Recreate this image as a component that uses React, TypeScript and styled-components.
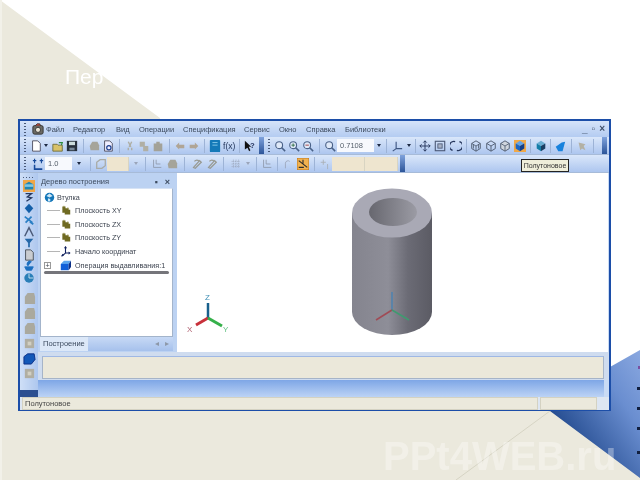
import styled, { createGlobalStyle } from "styled-components";

const GlobalStyle = createGlobalStyle`
  html, body {
    margin: 0;
    padding: 0;
    background: #fff;
  }
  * {
    box-sizing: border-box;
  }
`;

type Item = { k: string; w: number };

const MENU = [
  { t: "Файл", w: 27 },
  { t: "Редактор", w: 43 },
  { t: "Вид", w: 23 },
  { t: "Операции", w: 44 },
  { t: "Спецификация", w: 61 },
  { t: "Сервис", w: 35 },
  { t: "Окно", w: 27 },
  { t: "Справка", w: 39 },
  { t: "Библиотеки", w: 60 },
];

const ROW_ONE: Item[] = [
  { k: "grip", w: 10 }, { k: "new", w: 12 }, { k: "drop", w: 8 }, { k: "open", w: 15 }, { k: "save", w: 14 },
  { k: "sep", w: 8 }, { k: "blob", w: 14 }, { k: "preview", w: 14 }, { k: "sep", w: 8 }, { k: "cut", w: 14 },
  { k: "copy", w: 14 }, { k: "paste", w: 14 }, { k: "sep", w: 8 }, { k: "undo", w: 14 }, { k: "redo", w: 14 },
  { k: "sep", w: 7 }, { k: "book", w: 14 }, { k: "fx", w: 14 }, { k: "sep", w: 7 }, { k: "help", w: 14 },
  { k: "strip", w: 8 }, { k: "grip", w: 8 }, { k: "zoom", w: 14 }, { k: "zoomIn", w: 14 }, { k: "zoomOut", w: 14 },
  { k: "sep", w: 8 }, { k: "zoom", w: 14 }, { k: "scale", w: 37 }, { k: "drop", w: 9 }, { k: "sep", w: 6 },
  { k: "axes", w: 16 }, { k: "drop", w: 7 }, { k: "sep", w: 6 }, { k: "move", w: 14 }, { k: "frame", w: 16 },
  { k: "rotate", w: 15 }, { k: "sep", w: 6 }, { k: "wireA", w: 14 }, { k: "wireB", w: 15 }, { k: "wireC", w: 14 },
  { k: "shaded", w: 15 }, { k: "sep", w: 7 }, { k: "cubeDark", w: 14 }, { k: "sep", w: 5 }, { k: "cubeBlue", w: 14 },
  { k: "sep", w: 8 }, { k: "fadedStar", w: 14 }, { k: "sep", w: 8 }, { k: "strip", w: 14 },
];

const ROW_TWO: Item[] = [
  { k: "grip", w: 10 }, { k: "snap", w: 15 }, { k: "step", w: 27 }, { k: "drop", w: 14 }, { k: "sep", w: 8 },
  { k: "fadedBox", w: 13 }, { k: "field", w: 22 }, { k: "fadedDrop", w: 13 }, { k: "sep", w: 7 },
  { k: "fadedAxis", w: 15 }, { k: "blob", w: 15 }, { k: "sep", w: 10 }, { k: "fadedArc", w: 15 }, { k: "fadedArc", w: 15 },
  { k: "sep", w: 9 }, { k: "fadedGrid", w: 15 }, { k: "fadedDrop", w: 10 }, { k: "sep", w: 6 }, { k: "fadedAxis", w: 15 },
  { k: "sep", w: 7 }, { k: "fadedHook", w: 14 }, { k: "ortho", w: 16 }, { k: "sep", w: 6 }, { k: "fadedPlus", w: 15 },
  { k: "wide", w: 33 }, { k: "wide", w: 33 }, { k: "strip", w: 8 },
];

const SIDE_TOP = ["sideActive", "sideCurve", "sideDiamond", "sideTools", "sideAngle", "sideFunnel", "sideDoc", "sideBowl", "sideGlobe"];
const SIDE_LOW = ["sideGrey", "sideGrey", "sideGrey", "sideGreySquare", "sideBlue", "sideGreySquare"];

const TREE = [
  { t: "Плоскость XY", k: "plane" },
  { t: "Плоскость ZX", k: "plane" },
  { t: "Плоскость ZY", k: "plane" },
  { t: "Начало координат", k: "origin" },
];

const Glyph = ({ k }: { k: string }) => {
  const shapes: Record<string, React.ReactNode> = {
    new: <path d="M3 1h6l3 3v9H3z" fill="#fff" stroke="#445" />,
    open: (
      <>
        <path d="M1 5h5l1 1h5v7H1z" fill="#d8c26a" stroke="#6b6a3a" />
        <path d="M8 3l4 0-1 3" fill="none" stroke="#2e8a3c" strokeWidth="1.4" />
      </>
    ),
    save: (
      <>
        <rect x="1" y="1" width="12" height="12" fill="#27303c" />
        <rect x="3.5" y="2" width="7" height="4" fill="#cdd" />
        <rect x="4" y="9" width="6" height="3" fill="#789" />
      </>
    ),
    blob: <path d="M2 7l3-5h6l2 4v6H3z" fill="#a5a49a" />,
    preview: (
      <>
        <path d="M3 1h6l3 3v9H3z" fill="#eef" stroke="#445" />
        <circle cx="8" cy="9" r="2.5" fill="none" stroke="#1d3f8f" strokeWidth="1.4" />
      </>
    ),
    cut: <path d="M5 2l3 6M9 2L6 8M5 9v3M9 9v3" stroke="#aeaea4" strokeWidth="1.6" fill="none" />,
    copy: <path d="M2 2h6v5h4v6H6V8H2z" fill="#b0afa5" />,
    paste: <path d="M2 4h3V2h4v2h3v9H2z" fill="#a3a298" />,
    undo: <path d="M2 7l4-4v2.500h6v4H6V11z" fill="#b0a595" />,
    redo: <path d="M12 7L8 3v2.500H2v4h6V11z" fill="#b0a595" />,
    book: (
      <>
        <rect x="1" y="0" width="12" height="14" rx="1" fill="#1479b8" />
        <path d="M4 3h6M4 6h6" stroke="#8fd0ee" />
      </>
    ),
    fx: <text x="0" y="11" fontSize="10" fontFamily="Liberation Sans" fill="#25385c">f(x)</text>,
    help: (
      <>
        <path d="M1 1v10l3-2 2 4 1.500-1-2-4h3z" fill="#111" />
        <text x="7" y="9" fontSize="9" fontWeight="700" fontFamily="Liberation Sans" fill="#1c2b57">?</text>
      </>
    ),
    zoom: (
      <>
        <circle cx="6" cy="6" r="4" fill="#dfe9f8" stroke="#4a6288" strokeWidth="1.300" />
        <path d="M9 9l4 4" stroke="#4a6288" strokeWidth="1.800" />
      </>
    ),
    zoomIn: (
      <>
        <circle cx="6" cy="6" r="4" fill="#dfe9f8" stroke="#4a6288" strokeWidth="1.300" />
        <path d="M9 9l4 4" stroke="#4a6288" strokeWidth="1.800" />
        <path d="M4 6h4M6 4v4" stroke="#2a6a3a" />
      </>
    ),
    zoomOut: (
      <>
        <circle cx="6" cy="6" r="4" fill="#dfe9f8" stroke="#4a6288" strokeWidth="1.300" />
        <path d="M9 9l4 4" stroke="#4a6288" strokeWidth="1.800" />
        <path d="M4 6h4" stroke="#a03030" />
      </>
    ),
    axes: <path d="M6 2v8M6 10H13M6 10L2 13" stroke="#3d5580" strokeWidth="1.300" fill="none" />,
    move: <path d="M7 1v12M1 7h12M7 1L5 3M7 1l2 2M7 13l-2-2M7 13l2-2M1 7l2-2M1 7l2 2M13 7l-2-2M13 7l-2 2" stroke="#27385e" strokeWidth="1.100" fill="none" />,
    frame: (
      <>
        <rect x="1.500" y="1.500" width="11" height="11" fill="none" stroke="#4d5b78" strokeWidth="1.300" />
        <rect x="4.500" y="4.500" width="5" height="5" fill="#a8b3c6" stroke="#4d5b78" />
      </>
    ),
    rotate: <path d="M6 2A5 5 0 0 0 3 12M8 12A5 5 0 0 0 11 2" stroke="#27385e" strokeWidth="1.600" fill="none" />,
    wireA: (
      <>
        <path d="M2 4l5-3 5 3v6l-5 3-5-3z" fill="none" stroke="#515d72" strokeWidth="1.100" />
        <path d="M2 4l5 3 5-3M7 7v6M4 5v5M10 5v5" stroke="#515d72" fill="none" />
      </>
    ),
    wireB: <path d="M2 4l5-3 5 3v6l-5 3-5-3zM2 4l5 3 5-3M7 7v6" fill="none" stroke="#515d72" strokeWidth="1.100" />,
    wireC: (
      <>
        <path d="M2 4l5-3 5 3v6l-5 3-5-3z" fill="#cfd5dd" stroke="#515d72" strokeWidth="1.100" />
        <path d="M2 4l5 3 5-3M7 7v6" fill="none" stroke="#515d72" />
      </>
    ),
    shaded: (
      <>
        <rect x="-1" y="-1" width="16" height="16" fill="#f0a848" />
        <path d="M2 4l5-3 5 3-5 3z" fill="#63a4e8" />
        <path d="M2 4l5 3v6l-5-3z" fill="#1c66c4" />
        <path d="M12 4L7 7v6l5-3z" fill="#123f8a" />
      </>
    ),
    cubeDark: (
      <>
        <path d="M2 4l5-3 5 3-5 3z" fill="#6aaed2" />
        <path d="M2 4l5 3v6l-5-3z" fill="#147ea8" />
        <path d="M12 4L7 7v6l5-3z" fill="#1a3f63" />
      </>
    ),
    cubeBlue: <path d="M2 8l3 5h5l3-11-4 1z" fill="#1782dd" />,
    fadedStar: <path d="M3 3l8 2-2 2 2 5-4-2-2 2z" fill="#b3b1a4" />,
    snap: (
      <>
        <path d="M3 1v5M1 3h4M11 1v5M9 3h4" stroke="#184a9a" strokeWidth="1.300" />
        <path d="M3 8v5h9" stroke="#184a9a" strokeWidth="1.800" fill="none" />
      </>
    ),
    fadedBox: <path d="M2 5l4-3h6v7l-4 3H2z" fill="none" stroke="#a9aba6" strokeWidth="1.500" />,
    fadedAxis: <path d="M3 2v9h9M6 2v5h5" fill="none" stroke="#8f99ac" />,
    fadedArc: <path d="M3 11l7-8 2 2-7 7zM4 4a4 4 0 0 1 5-1" fill="none" stroke="#989a92" strokeWidth="1.500" />,
    fadedGrid: <path d="M2 4h10M2 7h10M2 10h10M4 2v10M7 2v10M10 2v10" stroke="#98a3b8" strokeDasharray="1 1" />,
    fadedHook: <path d="M4 12V6a3 3 0 0 1 5-2" fill="none" stroke="#9aa5ba" />,
    fadedPlus: <path d="M5 2v6M2 5h6M10 7v6" stroke="#a9b0b5" fill="none" />,
    ortho: (
      <>
        <rect x="0" y="0" width="14" height="14" fill="#f2b24f" stroke="#b66f1a" />
        <path d="M2 3l10 8M7 2v5M2 11h6" stroke="#2c2c2c" strokeWidth="1.300" fill="none" />
      </>
    ),
    plane: (
      <>
        <path d="M3 2h4v2h4v2h2v6H6v-2H3z" fill="#6f6a22" />
        <path d="M5 1v2M10 3v2" stroke="#8f8a3a" />
      </>
    ),
    origin: (
      <>
        <path d="M7 1v8M7 9h6M7 9l-5 4" stroke="#10205e" strokeWidth="1.400" fill="none" />
        <path d="M7 0L5 3h4zM13 9l-2-2v4zM2 13l1-3 2 2z" fill="#10205e" />
      </>
    ),
    solid: (
      <>
        <path d="M1 5l4-4h9l-3 4z" fill="#5aa5ee" />
        <path d="M1 5h10v8H1z" fill="#0f5fd8" />
        <path d="M11 5l3-4v8l-3 4z" fill="#0b2f86" />
      </>
    ),
    root: (
      <>
        <circle cx="7" cy="7" r="6" fill="#1376b8" />
        <path d="M3 5l4-3 4 3-4 2zM5 8l3 1v3H5z" fill="#cde7f7" />
      </>
    ),
    kompas: (
      <>
        <rect x="1" y="3" width="12" height="10" rx="2" fill="#6b6a64" stroke="#2c2c2c" />
        <circle cx="7" cy="8" r="3" fill="#e8e3d4" stroke="#2c2c2c" />
        <path d="M4 3l2-2h3l1 2" fill="#d24e3a" stroke="#2c2c2c" />
      </>
    ),
    sideActive: (
      <>
        <rect x="0" y="0" width="14" height="14" fill="#efa648" />
        <path d="M2 5l5-3 5 3v6H2z" fill="#1e86b6" />
        <path d="M2 5h10v3H2z" fill="#7ec6e4" />
      </>
    ),
    sideCurve: <path d="M3 3h7L5 7l5 1-6 4" fill="none" stroke="#27385e" strokeWidth="1.500" />,
    sideDiamond: <path d="M7 1l5 5-5 6-5-6z" fill="#145fa8" />,
    sideTools: <path d="M2 3l9 7M3 10l7-7M8 9l4 3" stroke="#2a7fc4" strokeWidth="2" fill="none" />,
    sideAngle: <path d="M2 12L7 2l5 10" stroke="#4a5a78" strokeWidth="1.700" fill="none" />,
    sideFunnel: <path d="M2 2h10L8 7v5H6V7z" fill="#2568a8" />,
    sideDoc: <path d="M3 1h6l3 3v9H3z" fill="#c9ccd0" stroke="#3e4650" />,
    sideBowl: <path d="M2 8h10l-2 4H4zM6 7a3 3 0 0 1 4-5" fill="#1b6fc0" stroke="#1b6fc0" />,
    sideGlobe: (
      <>
        <circle cx="7" cy="7" r="5.500" fill="#2a7fb8" />
        <path d="M7 2v5h5" stroke="#d7ecf6" fill="none" />
      </>
    ),
    sideGrey: <path d="M2 5l3-4h7l1 4v8H2z" fill="#aaa99e" />,
    sideGreySquare: (
      <>
        <rect x="2" y="2" width="10" height="10" fill="#b0aea2" />
        <rect x="5" y="5" width="4" height="4" fill="#d2cfc2" />
      </>
    ),
    sideBlue: <path d="M1 5l4-3h7l1 6-4 5H1z" fill="#1258b8" stroke="#0b2f86" />,
  };
  return (
    <svg width="14" height="14" viewBox="0 0 14 14">
      {shapes[k]}
    </svg>
  );
};

const ToolCell = ({ item }: { item: Item }) => {
  const { k, w } = item;
  if (k === "grip") return <Cell $w={w}><Grip /></Cell>;
  if (k === "sep") return <Cell $w={w}><Sep /></Cell>;
  if (k === "drop") return <Cell $w={w}><Arrow /></Cell>;
  if (k === "fadedDrop") return <Cell $w={w}><Arrow $faded /></Cell>;
  if (k === "strip") return <Cell $w={w}><Strip /></Cell>;
  if (k === "scale") return <Cell $w={w}><Combo>0.7108</Combo></Cell>;
  if (k === "step") return <Cell $w={w}><Combo>1.0</Combo></Cell>;
  if (k === "field" || k === "wide") return <Cell $w={w}><Field /></Cell>;
  return <Cell $w={w}><Glyph k={k} /></Cell>;
};

const App = () => {
  return (
    <>
      <GlobalStyle />
      <Page>
        <Backdrop viewBox="0 0 640 480">
          <defs>
            <linearGradient id="corner" x1="0" y1="1" x2="1" y2="0">
              <stop offset="0.2" stopColor="#1c4488" />
              <stop offset="0.7" stopColor="#6a8ed0" />
              <stop offset="1" stopColor="#8aa8e0" />
            </linearGradient>
          </defs>
          <path d="M0 0L160 118V411H640V480H0z" fill="#ebe9dd" />
          <path d="M0 0h2v480H0z" fill="#f2f1e9" />
          <path d="M610 367L640 350V478L550 411H610z" fill="url(#corner)" />
          <path d="M550 411L456 480" stroke="#d6d4c4" fill="none" />
          <path d="M638 366h2v3h-2z" fill="#7a4fa0" />
          <path d="M637 387h3v3h-3zM637 407h3v3h-3zM637 427h3v3h-3zM637 451h3v3h-3z" fill="#12203f" />
        </Backdrop>
        <Title>Пер</Title>
        <Win>
          <MenuBar>
            <Cell $w={10}><Grip /></Cell>
            <Cell $w={15}><Glyph k="kompas" /></Cell>
            {MENU.map((m) => (
              <MenuItem key={m.t} $w={m.w}>{m.t}</MenuItem>
            ))}
            <WinButtons>
              <span>_</span>
              <span>▫</span>
              <span>×</span>
            </WinButtons>
          </MenuBar>
          <ToolBar>
            {ROW_ONE.map((it, i) => <ToolCell key={i} item={it} />)}
          </ToolBar>
          <ToolBar>
            {ROW_TWO.map((it, i) => <ToolCell key={i} item={it} />)}
          </ToolBar>
          <Tip>Полутоновое</Tip>
          <Main>
            <SideStrip>
              <Dots />
              {SIDE_TOP.map((k, i) => <SideCell key={i}><Glyph k={k} /></SideCell>)}
              <SideGap />
              {SIDE_LOW.map((k, i) => <SideCellLow key={i}><Glyph k={k} /></SideCellLow>)}
              <SideFoot />
            </SideStrip>
            <Work>
              <Upper>
                <TreePanel>
                  <TreeHead>
                    <span>Дерево построения</span>
                    <HeadIcons><span>▪</span><span>×</span></HeadIcons>
                  </TreeHead>
                  <TreeBody>
                    <TreeRoot><Glyph k="root" /><span>Втулка</span></TreeRoot>
                    {TREE.map((r) => (
                      <TreeRow key={r.t}>
                        <Branch />
                        <Glyph k={r.k} />
                        <span>{r.t}</span>
                      </TreeRow>
                    ))}
                    <TreeRow>
                      <Plus>+</Plus>
                      <Glyph k="solid" />
                      <span>Операция выдавливания:1</span>
                    </TreeRow>
                    <StopBar />
                  </TreeBody>
                  <TabRow>
                    <Tab>Построение</Tab>
                    <TabArrows><span>◂</span><span>▸</span></TabArrows>
                  </TabRow>
                </TreePanel>
                <Viewport>
                  <svg width="431" height="179" viewBox="177 173 431 179">
                    <defs>
                      <linearGradient id="wall" x1="0" x2="1" y1="0" y2="0">
                        <stop offset="0" stopColor="#84848e" />
                        <stop offset="0.45" stopColor="#8e8e98" />
                        <stop offset="0.7" stopColor="#6b6b75" />
                        <stop offset="1" stopColor="#5b5b64" />
                      </linearGradient>
                      <linearGradient id="bore" x1="0" x2="1" y1="0" y2="0">
                        <stop offset="0" stopColor="#67676f" />
                        <stop offset="1" stopColor="#9b9ba4" />
                      </linearGradient>
                    </defs>
                    <path d="M352 213V312A40 23 0 0 0 432 312V213z" fill="url(#wall)" />
                    <ellipse cx="392" cy="213" rx="40" ry="24.500" fill="#a9a9b5" />
                    <ellipse cx="393" cy="212" rx="24" ry="14" fill="url(#bore)" />
                    <path d="M392 310V292" stroke="#5b83a8" strokeWidth="2" />
                    <path d="M392 310L376 320" stroke="#a04b55" strokeWidth="1.500" />
                    <path d="M392 310L409 320" stroke="#3f9a70" strokeWidth="1.500" />
                    <path d="M208 318V303" stroke="#18608c" strokeWidth="2.500" />
                    <path d="M208 318L196 325" stroke="#c8303a" strokeWidth="3" />
                    <path d="M208 318L222 326" stroke="#35b04a" strokeWidth="3" />
                    <text x="205" y="300" fontSize="8" fontFamily="Liberation Sans" fill="#3e8fb4">Z</text>
                    <text x="187" y="332" fontSize="8" fontFamily="Liberation Sans" fill="#b06070">X</text>
                    <text x="223" y="332" fontSize="8" fontFamily="Liberation Sans" fill="#60c080">Y</text>
                  </svg>
                </Viewport>
              </Upper>
              <Command>
                <CommandField />
              </Command>
              <BlueBar />
            </Work>
          </Main>
          <Status>
            <StatusCell $grow>Полутоновое</StatusCell>
            <StatusCell />
            <StatusEnd />
          </Status>
        </Win>
        <Mark>PPt4WEB.ru</Mark>
      </Page>
    </>
  );
};

const Page = styled.div`
  position: relative;
  width: 640px;
  height: 480px;
  overflow: hidden;
  padding-left: 18px;
  font-family: "Liberation Sans", Arial, sans-serif;
  background: #fff;
`;

const Backdrop = styled.svg`
  position: absolute;
  top: 0;
  left: 0;
  width: 640px;
  height: 480px;
`;

const Title = styled.div`
  position: relative;
  height: 119px;
  padding: 65px 0 0 47px;
  font-size: 21px;
  line-height: 24px;
  color: #fff;
  filter: blur(0.4px);
`;

const Win = styled.div`
  position: relative;
  width: 593px;
  height: 292px;
  border: 2px solid #1c4ea8;
  background: #c9dbf5;
  filter: blur(0.6px);
  color: #3c4a5e;
`;

const MenuBar = styled.div`
  display: flex;
  align-items: center;
  height: 16px;
  background: linear-gradient(#d6e4f9, #b4ccf1);
  font-size: 7.5px;
`;

const MenuItem = styled.div<{ $w: number }>`
  width: ${(p) => p.$w}px;
  padding-left: 1px;
  white-space: nowrap;
  flex: none;
`;

const WinButtons = styled.div`
  margin-left: auto;
  padding-right: 4px;
  display: flex;
  gap: 4px;
  font-size: 10px;
  font-weight: 700;
  line-height: 10px;
  color: #40506a;
`;

const ToolBar = styled.div`
  display: flex;
  align-items: center;
  height: 18px;
  overflow: hidden;
  background: linear-gradient(#dae7fa, #adc6ef);
  border-bottom: 1px solid #a7bbd8;
  &:last-of-type {
    border-bottom-color: #8d9aac;
  }
`;

const Cell = styled.div<{ $w: number }>`
  flex: none;
  width: ${(p) => p.$w}px;
  height: 100%;
  display: flex;
  align-items: center;
  justify-content: center;
  svg {
    flex: none;
    width: 12px;
    height: 12px;
  }
`;

const Grip = styled.div`
  width: 2px;
  height: 13px;
  background: repeating-linear-gradient(#4a5a78 0 1px, transparent 1px 3px);
`;

const Sep = styled.div`
  width: 1px;
  height: 14px;
  background: #9db3d6;
`;

const Arrow = styled.div<{ $faded?: boolean }>`
  width: 0;
  height: 0;
  border-left: 2px solid transparent;
  border-right: 2px solid transparent;
  border-top: 3px solid ${(p) => (p.$faded ? "#9aa5ba" : "#1d2a44")};
`;

const Strip = styled.div`
  width: 5px;
  height: 100%;
  background: linear-gradient(#7fa2dc, #2c5599);
`;

const Combo = styled.div`
  width: 100%;
  height: 13px;
  padding-left: 3px;
  background: #f7f9fd;
  font-size: 7.5px;
  line-height: 13px;
  color: #56606c;
`;

const Field = styled.div`
  width: 100%;
  height: 14px;
  background: #eee5cf;
  border-right: 1px solid #d8d4c2;
`;

const Tip = styled.div`
  position: absolute;
  left: 501px;
  top: 38px;
  width: 48px;
  height: 13px;
  background: #efeeda;
  border: 1px solid #222;
  font-size: 7px;
  line-height: 11px;
  text-align: center;
  color: #333;
`;

const Main = styled.div`
  display: flex;
  height: 224px;
`;

const SideStrip = styled.div`
  flex: none;
  width: 18px;
  display: flex;
  flex-direction: column;
  align-items: center;
  background: linear-gradient(90deg, #cfdff7, #aec7ee);
`;

const Dots = styled.div`
  height: 6px;
  width: 12px;
  margin-top: 1px;
  background: repeating-linear-gradient(90deg, #4a5a78 0 1px, transparent 1px 3px) center / 100% 1px no-repeat;
`;

const SideCell = styled.div`
  height: 11.5px;
  display: flex;
  align-items: center;
  justify-content: center;
  svg {
    width: 12px;
    height: 12px;
  }
`;

const SideGap = styled.div`
  height: 7px;
`;

const SideCellLow = styled(SideCell)`
  height: 15px;
  svg {
    width: 13px;
    height: 13px;
  }
`;

const SideFoot = styled.div`
  margin-top: auto;
  width: 100%;
  height: 7px;
  background: #2c4f90;
`;

const Work = styled.div`
  flex: 1;
  min-width: 0;
  display: flex;
  flex-direction: column;
`;

const Upper = styled.div`
  display: flex;
  height: 179px;
`;

const TreePanel = styled.div`
  flex: none;
  width: 139px;
  display: flex;
  flex-direction: column;
  background: #bcd2f2;
  padding: 2px 4px 1px 2px;
`;

const TreeHead = styled.div`
  height: 13px;
  display: flex;
  align-items: center;
  justify-content: space-between;
  padding: 0 3px 0 1px;
  font-size: 7.5px;
`;

const HeadIcons = styled.div`
  display: flex;
  gap: 7px;
  font-size: 9px;
  font-weight: 700;
`;

const TreeBody = styled.div`
  height: 149px;
  background: #fff;
  border: 1px solid #a3b4cb;
  border-top-color: #d7e3f5;
  padding: 1px 0 0 3px;
  font-size: 7.2px;
  color: #3d4450;
`;

const TreeRoot = styled.div`
  height: 14px;
  display: flex;
  align-items: center;
  gap: 2px;
  svg {
    width: 11px;
    height: 11px;
    flex: none;
  }
`;

const TreeRow = styled.div`
  height: 13.600px;
  display: flex;
  align-items: center;
  white-space: nowrap;
  svg {
    width: 11px;
    height: 11px;
    flex: none;
    margin-right: 4px;
  }
`;

const Branch = styled.div`
  width: 13px;
  height: 1px;
  margin-left: 3px;
  flex: none;
  background: #b5b5b5;
`;

const Plus = styled.div`
  width: 7px;
  height: 7px;
  margin: 0 9px 0 0;
  flex: none;
  border: 1px solid #9a9a9a;
  font-size: 7px;
  line-height: 5px;
  text-align: center;
`;

const StopBar = styled.div`
  height: 3px;
  margin-top: -1px;
  margin-right: 3px;
  background: #75757a;
  border-radius: 2px;
`;

const TabRow = styled.div`
  flex: 1;
  display: flex;
  align-items: stretch;
  justify-content: space-between;
  background: linear-gradient(#c7d9f5, #a6c1ec);
`;

const Tab = styled.div`
  width: 48px;
  padding-left: 3px;
  background: #dce8f8;
  font-size: 7.500px;
  line-height: 13px;
`;

const TabArrows = styled.div`
  display: flex;
  gap: 6px;
  padding-right: 4px;
  font-size: 8px;
  line-height: 13px;
  color: #8d98a8;
`;

const Viewport = styled.div`
  flex: none;
  width: 431px;
  margin-left: 0;
  background: #fff;
  svg {
    display: block;
  }
`;

const Command = styled.div`
  height: 28px;
  padding: 4px 5px 1px 4px;
  background: #cfdcef;
`;

const CommandField = styled.div`
  height: 23px;
  background: #ebe8da;
  border: 1px solid #a6b4c8;
  border-top-color: #9fb8e4;
`;

const BlueBar = styled.div`
  flex: 1;
  margin-right: 5px;
  background: linear-gradient(#7ea6e6, #bcd3f5);
`;

const Status = styled.div`
  display: flex;
  height: 13px;
  padding-left: 2px;
  gap: 2px;
  background: #dde6f2;
`;

const StatusCell = styled.div<{ $grow?: boolean }>`
  flex: ${(p) => (p.$grow ? "none" : "1")};
  width: ${(p) => (p.$grow ? "516px" : "auto")};
  padding-left: 2px;
  background: #ebe9dc;
  border: 1px solid #d4d2c2;
  font-size: 7.500px;
  line-height: 11px;
  color: #444;
`;

const StatusEnd = styled.div`
  width: 10px;
  flex: none;
`;

const Mark = styled.div`
  position: absolute;
  left: 383px;
  top: 433px;
  font-size: 40px;
  line-height: 46px;
  font-weight: 700;
  white-space: nowrap;
  color: rgba(255, 255, 255, 0.34);
  filter: blur(0.5px);
`;

export default App;
